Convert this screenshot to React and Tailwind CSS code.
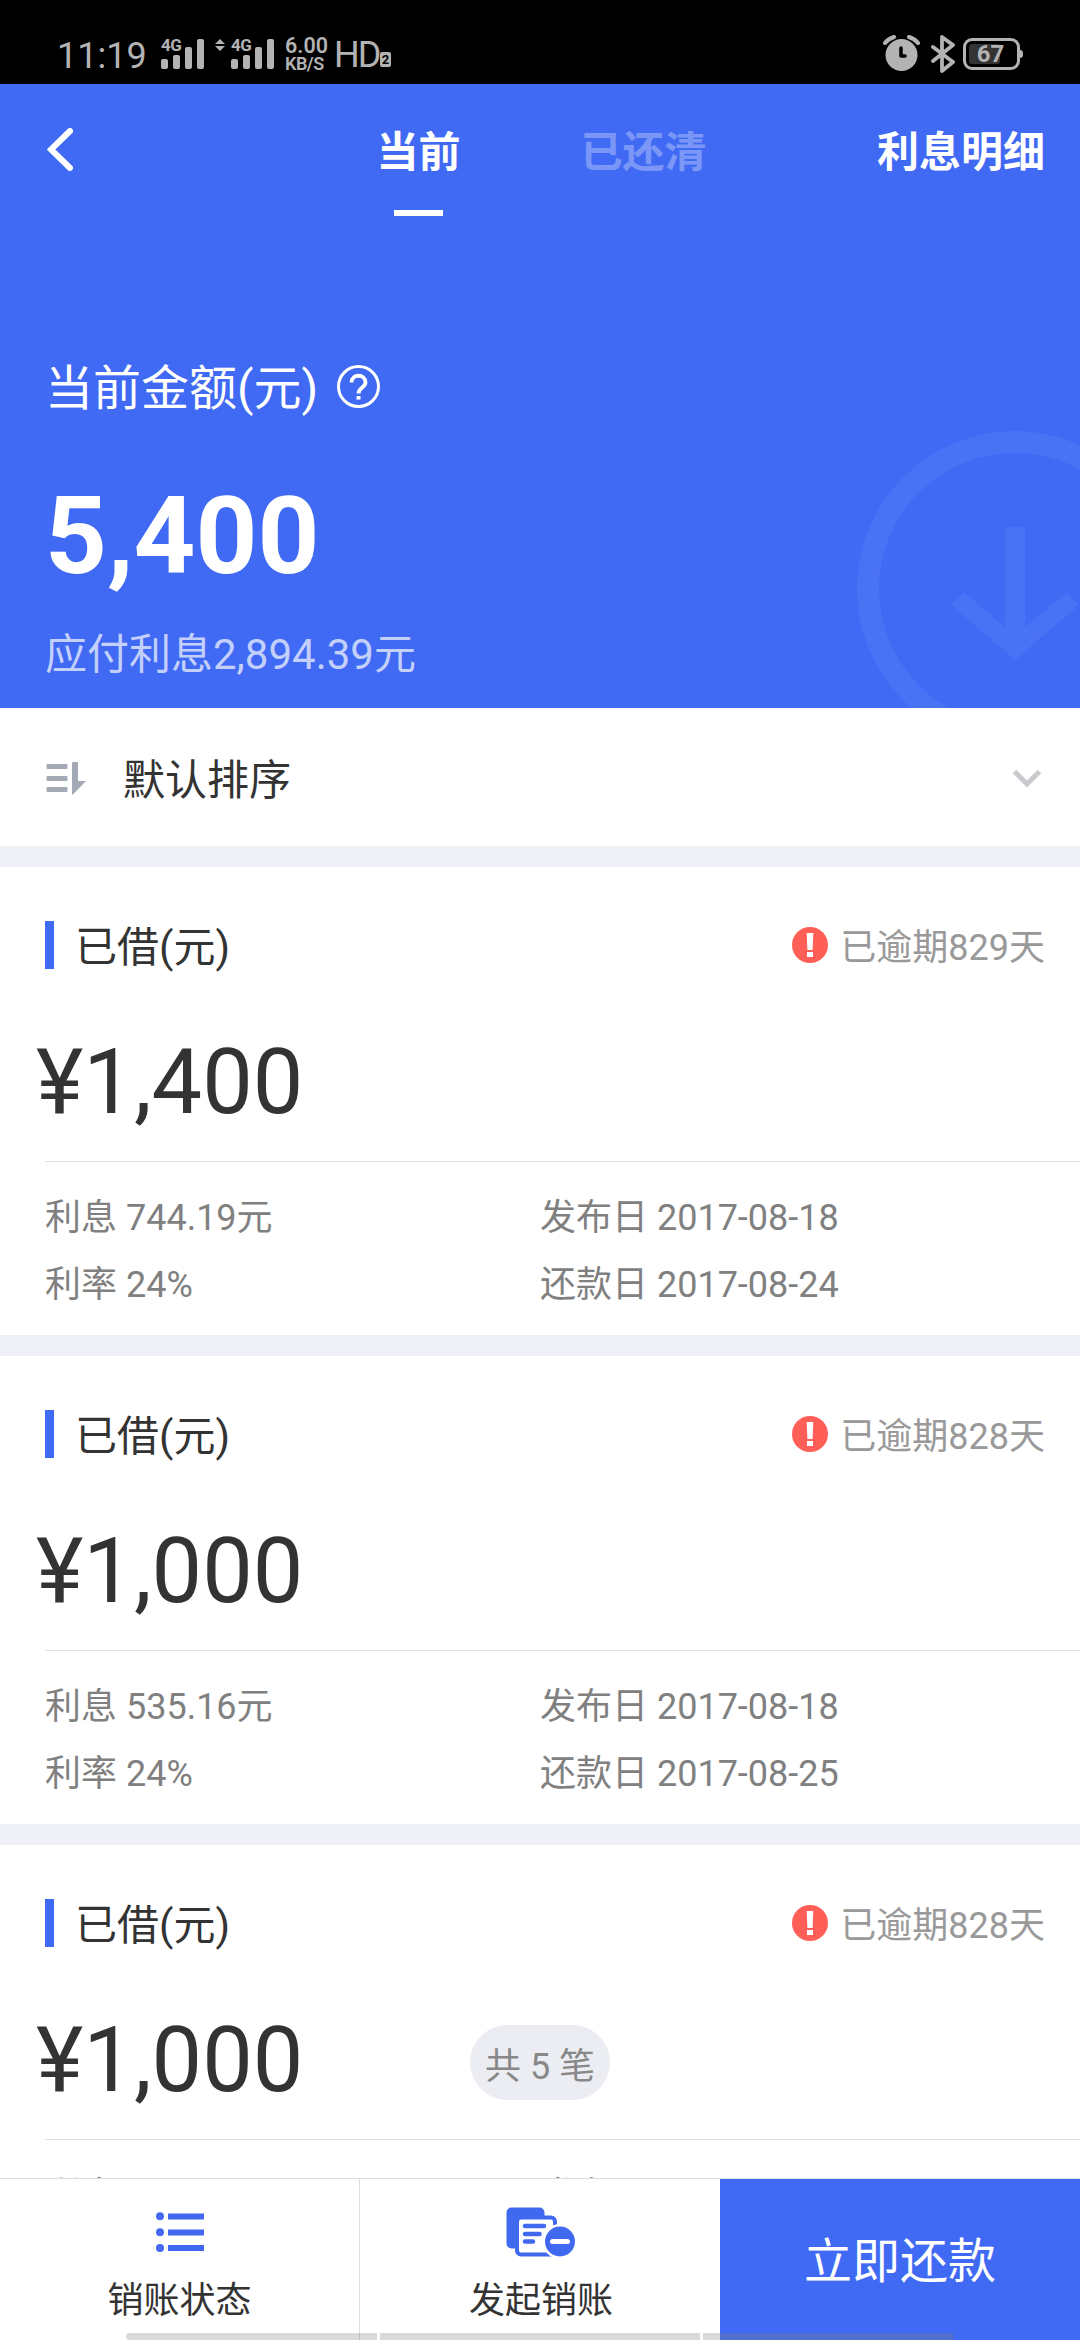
import React from "react";

const loans = [
    { id: 1, amount: "1,400", overdue: 829, interest: "744.19", rate: "24%", published: "2017-08-18", due: "2017-08-24" },
    { id: 2, amount: "1,000", overdue: 828, interest: "535.16", rate: "24%", published: "2017-08-18", due: "2017-08-25" },
    { id: 3, amount: "1,000", overdue: 828, interest: "535.16", rate: "24%", published: "2017-08-18", due: "2017-08-25" },
]

function Signal() {
    return (
        <div className="relative h-[30px] w-[43px]">
            <svg width="43" height="30" fill="#b3b3b3">
                <rect x="0" y="20" width="7" height="10" rx="2" />
                <rect x="12" y="16" width="7" height="14" rx="2" />
                <rect x="24" y="8" width="7" height="22" rx="2" />
                <rect x="36" y="0" width="7" height="30" rx="2" />
            </svg>
            <span className="absolute -top-[2px] left-0 text-[17px] leading-[16px] font-bold tracking-[-0.5px]">4G</span>
        </div>
    );
}

function StatusBar() {
    return (
        <div className="flex h-[84px] shrink-0 justify-between bg-black pt-[35px] pr-[60px] pl-[57px] text-[#b3b3b3]">
            <div className="flex">
                <span className="w-[104px] text-[36px] leading-[42px]">11:19</span>
                <div className="flex pt-1">
                    <Signal />
                    <svg className="mr-[6px] ml-[11px]" width="10" height="12" fill="#b3b3b3">
                        <path d="M5 0l5 5H0zM5 12l5-5H0z" />
                    </svg>
                    <Signal />
                </div>
                <div className="mt-[2px] ml-[11px] flex w-[49px] flex-col font-semibold">
                    <span className="text-[21.500px] leading-[18px]">6.00</span>
                    <span className="text-[18px] leading-[17px] tracking-[-0.5px]">KB/S</span>
                </div>
                <span className="w-[46px] text-[36px] leading-[41px] tracking-[-2px]">HD</span>
                <span className="mt-[17px] flex h-[15px] w-[11px] items-center justify-center rounded-[2px] bg-[#b3b3b3] text-[13px] font-bold text-black">2</span>
            </div>
            <div className="flex">
                <svg width="37" height="38" viewBox="0 0 37 38">
                    <circle cx="18.5" cy="20" r="16" fill="#b3b3b3" />
                    <path d="M2 8Q5 4 11 2M35 8Q32 4 26 2" fill="none" stroke="#b3b3b3" strokeWidth="4" strokeLinecap="round" />
                    <path d="M18 13v8h4" fill="none" stroke="#000" strokeWidth="3.5" strokeLinecap="round" strokeLinejoin="round" />
                </svg>
                <svg className="ml-[11px]" width="24" height="38" viewBox="0 0 24 38" fill="none" stroke="#b3b3b3" strokeWidth="3.8" strokeLinejoin="round" strokeLinecap="round">
                    <path d="M2 12l20 15-11 9V2l11 8L2 26" />
                </svg>
                <div className="relative mt-[3px] ml-[8px] h-[32px] w-[57px] rounded-[9px] border-[3px] border-[#b3b3b3] p-[3px]">
                    <div className="h-full w-[31px] rounded-[3px] bg-[#333]" />
                    <span className="absolute inset-0 pr-[2px] text-center text-[24px] leading-[27px] font-bold">67</span>
                    <span className="absolute top-[9px] -right-[6px] h-[8px] w-[3px] rounded-r-full bg-[#b3b3b3]" />
                </div>
            </div>
        </div>
    );
}

function Header() {
    return (
        <div className="relative flex h-[624px] shrink-0 flex-col overflow-hidden bg-[#4069f4] text-white">
            <div className="flex h-[132px] justify-between pr-[35px] pl-[47px] text-[42px] leading-[60px] font-bold">
                <svg className="mt-[44px]" width="26" height="43" viewBox="0 0 26 43" fill="none" stroke="#fff" strokeWidth="6">
                    <path d="M23 3L4 21.5 23 40" strokeLinecap="round" />
                </svg>
                <div className="ml-[133px] flex gap-[120px] pt-[39px]">
                    <div className="flex flex-col items-center">
                        <span>当前</span>
                        <span className="mt-[27px] h-[6px] w-[49px] bg-white" />
                    </div>
                    <span className="opacity-30">已还清</span>
                </div>
                <span className="pt-[39px]">利息明细</span>
            </div>
            <div className="mt-[137px] flex items-center gap-[19px] pl-[45px] text-[48px] leading-[72px]">
                <span>当前金额(元)</span>
                <svg className="mb-[5px]" width="43" height="43" viewBox="0 0 43 43" fill="none" stroke="#fff">
                    <circle cx="21.5" cy="21.5" r="20" strokeWidth="3" />
                    <path d="M14.5 17.500c0-9 14-9 14 0 0 5-7 5-7 11" strokeWidth="3.8" />
                    <path d="M21.5 31v3.6" strokeWidth="4" />
                </svg>
            </div>
            <p className="mt-[47px] pl-[45px] text-[108px] leading-[128px] font-bold">5,400</p>
            <p className="mt-[25px] pl-[45px] text-[42px] leading-[60px] text-white/70">应付利息2,894.39元</p>
            <svg className="absolute right-0 bottom-0" width="240" height="290" viewBox="840 418 240 290">
                <circle cx="1015" cy="589" r="147" fill="none" stroke="#4a72f5" strokeWidth="22" />
                <path d="M1005 527h20v100l42-35 12 13-64 55-64-55 13-13 41 35z" fill="#4a72f5" />
            </svg>
        </div>
    );
}

function SortRow() {
    return (
        <div className="flex h-[138px] shrink-0 items-center pt-[2px] pr-[38px] pl-[46px] text-[42px] text-[#333]">
            <svg width="40" height="34" viewBox="0 0 40 34" fill="#a3aab6">
                <rect x="0.5" y="3" width="21" height="5" rx="1" />
                <rect x="0.5" y="15" width="21" height="5" rx="1" />
                <rect x="0.5" y="26" width="21" height="5" rx="1" />
                <path d="M26 2q0-1 1-1h4q1 0 1 1v18h8L27 33.500q-1 .5-1-1z" />
            </svg>
            <span className="ml-[37px] pt-[4px]">默认排序</span>
            <svg className="mt-[2px] ml-auto" width="30" height="20" viewBox="0 0 30 20" fill="none" stroke="#c8cacd" strokeWidth="5">
                <path d="M2.500 2.500L15 15 27.500 2.500" />
            </svg>
        </div>
    );
}

function LoanCard({ loan }) {
    return (
        <div className="h-[489px] shrink-0 border-t-[21px] border-[#eef0f5] bg-white">
            <div className="mt-[48px] flex h-[60px] items-center pr-[35px] pl-[45px]">
                <span className="h-[48px] w-[9px] bg-[#4069f4]" />
                <span className="ml-[21px] pt-[6px] text-[42px] leading-[60px] text-[#333]">已借(元)</span>
                <svg className="ml-auto" width="36" height="36" viewBox="0 0 36 36">
                    <circle cx="18" cy="18" r="18" fill="#ff5f57" />
                    <path d="M14.700 6h6.600l-.7 17h-5.200zM15 25h6v5h-6z" fill="#fff" />
                </svg>
                <span className="ml-[12px] pt-[6px] text-[36px] leading-[52px] text-[#999]">已逾期{loan.overdue}天</span>
            </div>
            <p className="mt-[55px] pl-[36px] text-[90px] leading-[106px] text-[#333]">¥{loan.amount}</p>
            <div className="mt-[25px] ml-[45px] grid grid-cols-[495px_1fr] border-t border-[#e0e0e0] pt-[23px] text-[36px] leading-[67px] text-[#808080]">
                <span>利息 {loan.interest}元</span>
                <span>发布日 {loan.published}</span>
                <span>利率 {loan.rate}</span>
                <span>还款日 {loan.due}</span>
            </div>
        </div>
    );
}

function BottomBar() {
    return (
        <div className="relative grid h-[162px] shrink-0 grid-cols-3 border-t border-[#dcdfdf] bg-white text-[36px] leading-[52px] text-[#333]">
            <div className="flex flex-col items-center border-r border-[#dcdfdf] pt-[28px]">
                <svg width="48" height="50" viewBox="0 0 48 50" fill="#4069f0">
                    <circle cx="4" cy="9.300" r="4" />
                    <circle cx="4" cy="25.300" r="4" />
                    <circle cx="4" cy="41" r="4" />
                    <path d="M12 6.500h36v6H12zM12 22.500h36v6H12zM12 38h36v6H12z" />
                </svg>
                <span className="mt-[18px]">销账状态</span>
            </div>
            <div className="flex flex-col items-center pt-[28px] pl-[2px]">
                <svg width="70" height="50" viewBox="0 0 70 50" fill="#4069f0">
                    <rect x="0.500" y="0.500" width="38" height="41" rx="5" />
                    <rect x="11" y="10.500" width="38" height="37" rx="4" fill="#fff" stroke="#4069f0" strokeWidth="4" />
                    <path d="M19 19h19M19 27h14.500M19 34.500h8" stroke="#4069f0" strokeWidth="4.500" strokeLinecap="round" />
                    <circle cx="54" cy="34.500" r="17.500" fill="#fff" />
                    <circle cx="54" cy="34.500" r="15" />
                    <path d="M46.500 34.500h15" stroke="#fff" strokeWidth="5" strokeLinecap="round" />
                </svg>
                <span className="mt-[18px]">发起销账</span>
            </div>
            <div className="flex items-center justify-center bg-[#4069f4] pt-[5px] text-[48px] text-white">立即还款</div>
            {/* system gesture hints */}
            <div className="absolute bottom-0 left-[126px] flex h-[7px] w-[828px]">
                <span className="w-[251px] rounded-l-full bg-[#808080]/30" />
                <span className="w-[3px] bg-white" />
                <span className="w-[320px] bg-[#808080]/30" />
                <span className="w-[3px] bg-white" />
                <span className="w-[251px] rounded-r-full bg-[#808080]/30" />
            </div>
        </div>
    );
}

export default function App() {
    return (
        <div className="relative flex h-[2340px] w-[1080px] flex-col overflow-hidden bg-white font-[Roboto,'Noto_Sans_CJK_SC',sans-serif]">
            <StatusBar />
            <Header />
            <SortRow />
            <div className="flex min-h-0 flex-1 flex-col overflow-hidden">
                {loans.map((loan) => {
                    return <LoanCard loan={loan} key={loan.id} />
                })}
            </div>
            <BottomBar />
            <div className="absolute top-[2025px] left-[470px] flex h-[75px] w-[140px] items-center justify-center rounded-full bg-[#ebedf2] pt-[8px] text-[36px] text-[#888]">共 5 笔</div>
        </div>
    );
}
